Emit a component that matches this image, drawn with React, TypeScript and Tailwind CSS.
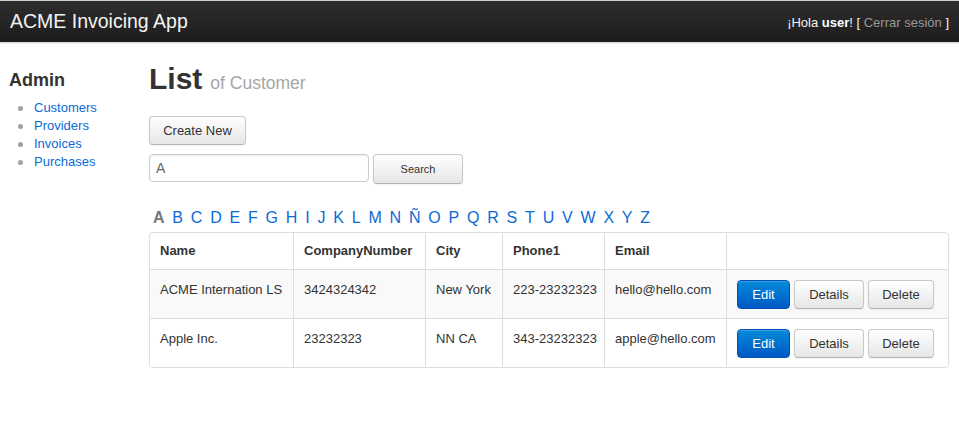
import React from 'react';

const letters = ['A', 'B', 'C', 'D', 'E', 'F', 'G', 'H', 'I', 'J', 'K', 'L', 'M', 'N', 'Ñ', 'O', 'P', 'Q', 'R', 'S', 'T', 'U', 'V', 'W', 'X', 'Y', 'Z'];

const customers = [
  { name: 'ACME Internation LS', number: '3424324342', city: 'New York', phone: '223-23232323', email: 'hello@hello.com' },
  { name: 'Apple Inc.', number: '23232323', city: 'NN CA', phone: '343-23232323', email: 'apple@hello.com' },
];

const menu = ['Customers', 'Providers', 'Invoices', 'Purchases'];

const btn =
  'rounded-[4px] border border-[#c8c8c8] border-b-[#b3b3b3] bg-gradient-to-b from-white to-[#e6e6e6] text-[#333] shadow-[inset_0_1px_0_rgba(255,255,255,0.3),0_1px_2px_rgba(0,0,0,0.06)]';

const App: React.FC = () => {
  return (
    <div className="min-h-screen bg-white font-['Liberation_Sans',Arial,sans-serif] text-[13px] text-[#333]">
      {/* navbar */}
      <div className="border-t border-[#cfcfcf] shadow-[0_1px_0_#d6d6d6,0_2px_0_#eeeeee]">
        <div className="flex h-[41px] items-center justify-between bg-gradient-to-b from-[#2e2e2e] to-[#1c1c1c] px-[10px]">
          <a className="mb-[2px] text-[19.5px] leading-[24px] text-[#f2f2f2]">ACME Invoicing App</a>
          <div className="mt-[2px] text-[13px] leading-[18px] text-[#f2f2f2]">
            ¡Hola <b className="font-bold text-white">user</b>! [ <a className="text-[#999]">Cerrar sesión</a> ]
          </div>
        </div>
      </div>

      <div className="flex">
        {/* sidebar */}
        <div className="w-[149px] shrink-0 pl-[9px] pt-[28px]">
          <h4 className="text-[18px] font-bold leading-[20px] text-[#333]">Admin</h4>
          <ul className="mt-[9px] pl-[9px]">
            {menu.map((m) => (
              <li key={m} className="flex items-center leading-[18px]">
                <span className="mr-[11px] h-[5px] w-[5px] rounded-full bg-[#a0a0a0]"></span>
                <a className="text-[#0b6ad6]">{m}</a>
              </li>
            ))}
          </ul>
        </div>

        {/* main */}
        <div className="flex-1 pr-[10px] pt-[19px]">
          <h1 className="flex items-baseline gap-[8px]">
            <span className="text-[30px] font-bold leading-[36px] text-[#333]">List</span>
            <span className="text-[17.5px] text-[#a6a6a6]">of Customer</span>
          </h1>

          <button className={`${btn} mt-[19px] h-[29px] w-[97px] text-[13px]`}>Create New</button>

          <div className="mt-[9px] flex items-start gap-[4px]">
            <input
              defaultValue="A"
              className="h-[28px] w-[220px] rounded-[4px] border border-[#cccccc] px-[6px] text-[14px] text-[#666] shadow-[inset_0_1px_1px_rgba(0,0,0,0.075)] outline-none"
            />
            <button className={`${btn} h-[30px] w-[90px] text-[11px]`}>Search</button>
          </div>

          <div className="mt-[24px] flex gap-[7.8px] pl-[4px] text-[16px] leading-[20px]">
            {letters.map((l, i) =>
              i === 0 ? (
                <span key={l} className="font-bold text-[#777]">{l}</span>
              ) : (
                <a key={l} className="text-[#0b6ad6]">{l}</a>
              )
            )}
          </div>

          <div className="mt-[4px] w-[800px] overflow-hidden rounded-[4px] border border-[#dddddd]">
            <div className="grid grid-cols-[143px_132px_77px_102px_122px_222px]">
              {['Name', 'CompanyNumber', 'City', 'Phone1', 'Email', ''].map((h, i) => (
                <div
                  key={i}
                  className={`flex h-[36px] items-center px-[10px] font-bold leading-[20px] ${i > 0 ? 'border-l border-[#dddddd]' : ''}`}
                >
                  {h}
                </div>
              ))}
              {customers.map((c, r) => {
                const cells = [c.name, c.number, c.city, c.phone, c.email];
                const bg = r === 0 ? 'bg-[#f9f9f9]' : 'bg-white';
                return (
                  <React.Fragment key={c.name}>
                    {cells.map((v, i) => (
                      <div
                        key={i}
                        className={`h-[49px] whitespace-nowrap border-t border-[#dddddd] px-[10px] pt-[10px] leading-[19px] ${bg} ${i > 0 ? 'border-l' : ''}`}
                      >
                        {v}
                      </div>
                    ))}
                    <div className={`flex h-[49px] gap-[4px] border-l border-t border-[#dddddd] px-[10px] pt-[10px] ${bg}`}>
                      <button className="h-[29px] w-[53px] rounded-[4px] border border-[#0050b8] bg-gradient-to-b from-[#0a8ada] to-[#0058c4] text-[13px] text-white shadow-[inset_0_1px_0_rgba(255,255,255,0.2)]">
                        Edit
                      </button>
                      <button className={`${btn} h-[29px] w-[70px] text-[13px]`}>Details</button>
                      <button className={`${btn} h-[29px] w-[66px] text-[13px]`}>Delete</button>
                    </div>
                  </React.Fragment>
                );
              })}
            </div>
          </div>
        </div>
      </div>
    </div>
  );
};

export default App;
